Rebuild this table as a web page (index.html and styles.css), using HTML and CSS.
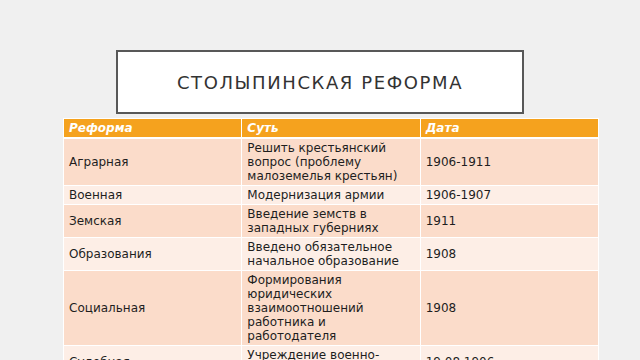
FILE: index.html
```html
<!DOCTYPE html>
<html lang="ru">
<head>
<meta charset="utf-8">
<link rel="stylesheet" href="styles.css">
</head>
<body>
<div class="slide">
  <div class="title-box"><h1 class="title">Столыпинская реформа</h1></div>
  <table class="reform-table">
    <thead>
      <tr><th>Реформа</th><th>Суть</th><th>Дата</th></tr>
    </thead>
    <tbody>
      <tr class="dark"><td>Аграрная</td><td>Решить крестьянский вопрос (проблему малоземелья крестьян)</td><td>1906-1911</td></tr>
      <tr class="light"><td>Военная</td><td>Модернизация армии</td><td>1906-1907</td></tr>
      <tr class="dark"><td>Земская</td><td>Введение земств в западных губерниях</td><td>1911</td></tr>
      <tr class="light"><td>Образования</td><td>Введено обязательное начальное образование</td><td>1908</td></tr>
      <tr class="dark"><td>Социальная</td><td>Формирования юридических взаимоотношений работника и работодателя</td><td>1908</td></tr>
      <tr class="light"><td>Судебная</td><td>Учреждение военно-полевых судов</td><td>19.08.1906</td></tr>
    </tbody>
  </table>
</div>
</body>
</html>
```
FILE: styles.css
```css
html, body {
  margin: 0;
  padding: 0;
  background: #f0f0f0;
  overflow: hidden;
}
.slide {
  width: 640px;
  height: 360px;
  overflow: hidden;
  display: flex;
  flex-direction: column;
  align-items: flex-start;
  padding-top: 50px;
  box-sizing: border-box;
  font-family: "DejaVu Sans", sans-serif;
}
.title-box {
  flex-shrink: 0;
  margin-left: 116px;
  width: 408px;
  height: 64px;
  box-sizing: border-box;
  border: 2px solid #585858;
  background: #ffffff;
  display: flex;
  align-items: center;
  justify-content: center;
}
.title {
  margin: 0;
  font-weight: normal;
  font-size: 18px;
  letter-spacing: 1.6px;
  text-transform: uppercase;
  color: #333333;
}
.reform-table {
  flex-shrink: 0;
  margin-top: 4px;
  margin-left: 63px;
  width: 536px;
  border-collapse: collapse;
  table-layout: fixed;
  font-size: 12px;
  color: #1e1e1e;
}
.reform-table th,
.reform-table td {
  border: 1px solid #ffffff;
  padding: 2px 9px 2px 5px;
  text-align: left;
  vertical-align: middle;
  line-height: 14px;
}
.reform-table th {
  background: #f5a21e;
  color: #ffffff;
  font-weight: bold;
  font-style: italic;
  border-bottom-width: 2px;
}
.reform-table tr.dark td { background: #fbdcca; }
.reform-table tr.light td { background: #fdeee6; }
```
